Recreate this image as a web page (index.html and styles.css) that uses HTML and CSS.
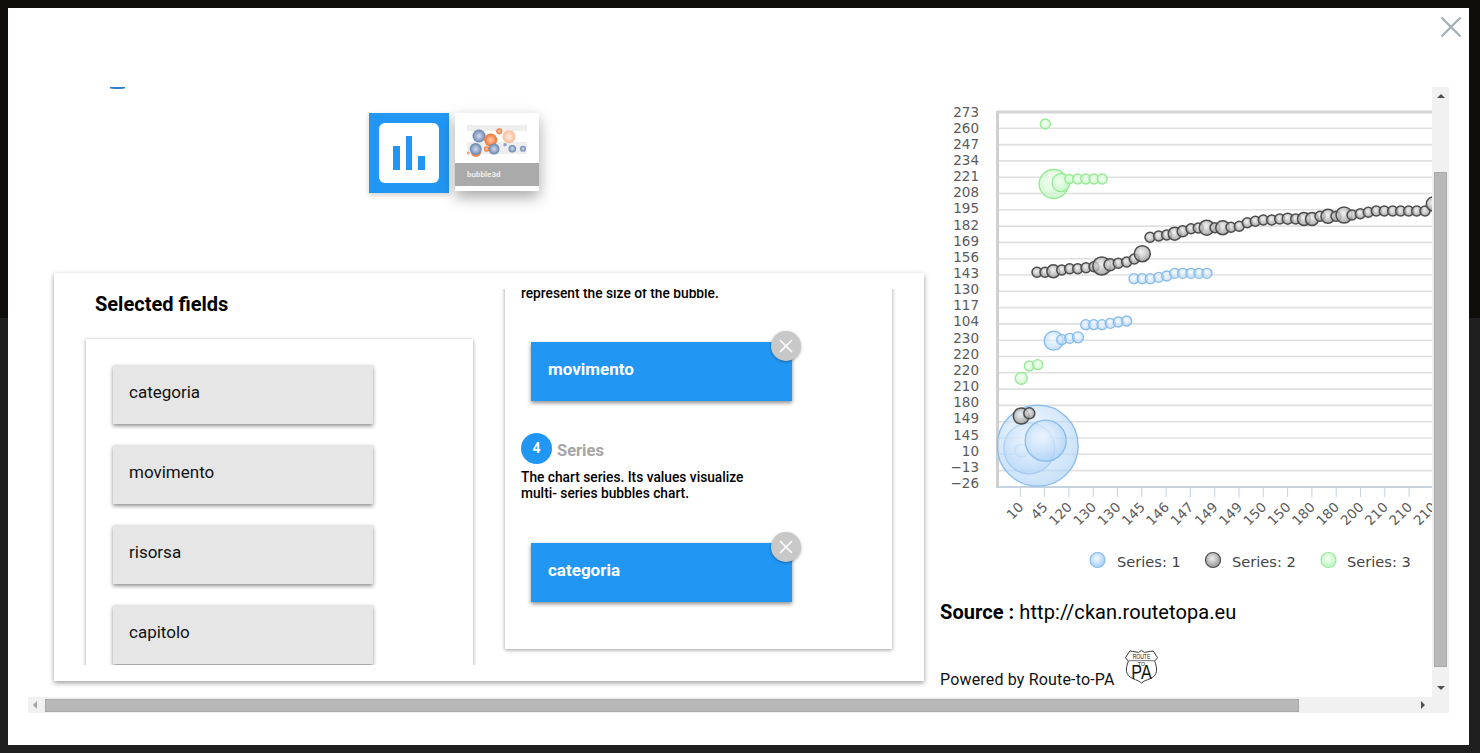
FILE: index.html
```html
<!DOCTYPE html>
<html lang="en">
<head>
    <meta charset="UTF-8">
    <meta name="viewport" content="width=device-width, initial-scale=1.0">
    <title>Bubble chart datalet</title>
    <link rel="stylesheet" href="styles.css">
</head>
<body>
    <div class="modal">
        <button class="modal-close" aria-label="Close">
            <svg width="22" height="22" viewBox="0 0 22 22"><path d="M1.5 1.5 20.5 20.5M20.5 1.5 1.5 20.5" /></svg>
        </button>
        <div class="frame">
            <div class="viewport">
                <div class="main">
                    <div class="spinner"></div>
                    <div class="tools">
                        <div class="tool-icon">
                            <div class="tool-icon-inner">
                                <span class="bar bar-mid"></span>
                                <span class="bar bar-tall"></span>
                                <span class="bar bar-low"></span>
                            </div>
                        </div>
                        <div class="thumb">
                            <svg class="thumb-pic" width="84" height="50" viewBox="455 113 84 50">
                                <defs>
                                    <radialGradient id="t-blue"><stop offset="0" stop-color="#d5dcea" /><stop offset="1" stop-color="#6485b4" /></radialGradient>
                                    <radialGradient id="t-orange"><stop offset="0" stop-color="#fdd0b4" /><stop offset="1" stop-color="#f26f2c" /></radialGradient>
                                    <radialGradient id="t-peach"><stop offset="0" stop-color="#fdeee4" /><stop offset="1" stop-color="#fabb98" /></radialGradient>
                                </defs>
                                <rect x="467" y="125" width="60" height="6" fill="#eeeeee" />
                                <rect x="467" y="142" width="60" height="12" fill="#eeeeee" />
                                <circle cx="499.3" cy="131.3" r="3" fill="url(#t-orange)" />
                                <circle cx="509" cy="136.7" r="6.5" fill="url(#t-peach)" />
                                <circle cx="479" cy="136" r="6.5" fill="url(#t-blue)" />
                                <circle cx="490.7" cy="140" r="6.5" fill="url(#t-orange)" />
                                <circle cx="476" cy="152" r="5" fill="url(#t-orange)" />
                                <circle cx="475.7" cy="149" r="6" fill="url(#t-blue)" />
                                <circle cx="486.7" cy="149" r="2.800" fill="url(#t-orange)" />
                                <circle cx="494" cy="149" r="5.500" fill="url(#t-blue)" />
                                <circle cx="512.3" cy="148.7" r="3.800" fill="url(#t-blue)" />
                                <circle cx="523" cy="148.7" r="3" fill="url(#t-blue)" />
                                <circle cx="505" cy="144.7" r="1.800" fill="#8aa3c8" />
                                <circle cx="468.3" cy="153" r="1.500" fill="#f7a478" />
                            </svg>
                            <div class="thumb-label">bubble3d</div>
                        </div>
                    </div>
                    <div class="card">
                        <div class="card-clip">
                            <div class="fields-col">
                                <h2 class="fields-title">Selected fields</h2>
                                <div class="panel fields-panel">
                                    <div class="field">categoria</div>
                                    <div class="field">movimento</div>
                                    <div class="field">risorsa</div>
                                    <div class="field">capitolo</div>
                                </div>
                            </div>
                            <div class="panel inputs-panel">
                                <p class="step-desc">represent the size of the bubble.</p>
                                <div class="chosen chosen-first">
                                    movimento
                                    <span class="chosen-remove"><svg width="14" height="14" viewBox="0 0 14 14"><path d="M1 1 13 13M13 1 1 13" /></svg></span>
                                </div>
                                <div class="step-head">
                                    <span class="step-num">4</span>
                                    <span class="step-name">Series</span>
                                </div>
                                <p class="step-desc">The chart series. Its values visualize multi- series bubbles chart.</p>
                                <div class="chosen">
                                    categoria
                                    <span class="chosen-remove"><svg width="14" height="14" viewBox="0 0 14 14"><path d="M1 1 13 13M13 1 1 13" /></svg></span>
                                </div>
                            </div>
                        </div>
                    </div>
                </div>
                <div class="side">
                    <svg id="chart" class="chart" width="492" height="475" viewBox="940 100 492 475"></svg>
                    <p class="source"><b>Source :</b> http://ckan.routetopa.eu</p>
                    <div class="powered">
                        <span>Powered by Route-to-PA</span>
                        <svg class="shield" width="35" height="35" viewBox="0 0 36 36">
                            <path d="M18 1.5 21 3.5 27 2.5 30 2 34.5 9 31.5 12.5C34.5 20 35 27 27 30.5 23 32 20 33 18 35 16 33 13 32 9 30.5 1 27 1.500 20 4.500 12.500L1.500 9 6 2 9 2.500 15 3.500Z" />
                            <path class="shield-line" d="M5 12H31" />
                            <text class="shield-small" x="18" y="10" textLength="18" lengthAdjust="spacingAndGlyphs">ROUTE</text>
                            <text class="shield-tiny" x="18" y="17">TO</text>
                            <text class="shield-big" x="18" y="31" textLength="21" lengthAdjust="spacingAndGlyphs">PA</text>
                        </svg>
                    </div>
                </div>
            </div>
            <div class="vbar">
                <span class="arrow arrow-up"></span>
                <span class="vbar-thumb"></span>
                <span class="arrow arrow-down"></span>
            </div>
            <div class="hbar">
                <span class="arrow arrow-left"></span>
                <span class="hbar-thumb"></span>
                <span class="arrow arrow-right"></span>
            </div>
        </div>
    </div>
    <script src="chart.js"></script>
</body>
</html>
```

FILE: styles.css
```css
* {
    box-sizing: border-box;
}
body {
    margin: 0;
    height: 753px;
    overflow: hidden;
    font-family: Roboto, "Liberation Sans", sans-serif;
    background: linear-gradient(#100e0b 318px, #1f1f1f 318px);
}
.modal {
    position: relative;
    margin: 8px 11px 8px 8px;
    height: 737px;
    padding: 79px 20px 32px;
    background: #fff;
}
.modal-close {
    position: absolute;
    top: 8px;
    right: 7px;
    padding: 0;
    border: 0;
    background: none;
}
.modal-close svg {
    display: block;
}
.modal-close path {
    fill: none;
    stroke: #a4b1b7;
    stroke-width: 2.4;
}

/* scrolling frame */
.frame {
    display: grid;
    grid-template-columns: 1fr 17px;
    grid-template-rows: 610px 16px;
    height: 626px;
}
.viewport {
    display: flex;
    overflow: hidden;
}
.vbar {
    display: flex;
    flex-direction: column;
    align-items: center;
    justify-content: space-between;
    padding: 7px 0;
    background: #f1f1f1;
}
.vbar-thumb {
    width: 13px;
    height: 495px;
    margin-top: 67px;
    margin-bottom: 13px;
    background: #b8b8b8;
    border: 1px solid #a9a9a9;
}
.hbar {
    grid-column: 1 / 3;
    display: flex;
    align-items: center;
    padding: 0 24px 0 5px;
    background: #f1f1f1;
}
.hbar-thumb {
    width: 1254px;
    height: 13px;
    margin-left: 8px;
    margin-right: auto;
    background: #b8b8b8;
    border: 1px solid #a9a9a9;
}
.arrow {
    width: 0;
    height: 0;
    border: 4px solid transparent;
}
.arrow-up {
    border-top: 0;
    border-bottom: 4px solid #505050;
}
.arrow-down {
    border-bottom: 0;
    border-top: 4px solid #505050;
}
.arrow-left {
    border-left: 0;
    border-right: 4px solid #a3a3a3;
}
.arrow-right {
    border-right: 0;
    border-left: 4px solid #505050;
}

/* left part */
.main {
    position: relative;
    flex: 0 0 902px;
    padding-left: 26px;
}
.spinner {
    position: absolute;
    top: 0;
    left: 82px;
    width: 15px;
    height: 1.500px;
    background: #2b7fc4;
    border-radius: 0 0 50% 50%;
}
.tools {
    display: flex;
    align-items: flex-start;
    gap: 6px;
    height: 186px;
    padding: 26px 0 0 315px;
}
.tool-icon {
    width: 80px;
    height: 80px;
    padding: 10px;
    background: #2196f3;
    box-shadow: 0 2px 6px rgba(0, 0, 0, 0.2);
}
.tool-icon-inner {
    display: flex;
    align-items: flex-end;
    justify-content: center;
    gap: 6px;
    height: 60px;
    padding-bottom: 13px;
    background: #fff;
    border-radius: 6px;
}
.bar {
    width: 6.500px;
    background: #2196f3;
}
.bar-mid {
    height: 24px;
}
.bar-tall {
    height: 34px;
}
.bar-low {
    height: 14px;
}
.thumb {
    width: 84px;
    height: 78px;
    background: #fff;
    box-shadow: 0 6px 14px rgba(0, 0, 0, 0.35);
}
.thumb-pic {
    display: block;
}
.thumb-label {
    height: 23px;
    padding-left: 12px;
    font-size: 8px;
    font-weight: 700;
    line-height: 23px;
    color: #eee;
    background: #aaaaaa;
}
.card {
    width: 870px;
    height: 408px;
    padding: 16px 22px;
    background: #fff;
    box-shadow: 0 2px 5px rgba(0, 0, 0, 0.4);
}
.card-clip {
    display: flex;
    gap: 32px;
    height: 376px;
    padding: 0 10px;
    overflow: hidden;
}
.panel {
    background: #fff;
    box-shadow: 0 1px 4px rgba(0, 0, 0, 0.4);
}
.fields-col {
    flex: 0 0 387px;
}
.fields-title {
    height: 50px;
    margin: 0;
    padding: 3px 0 0 9px;
    font-size: 20px;
    font-weight: 700;
    line-height: 24px;
    color: #000;
}
.fields-panel {
    padding: 26px 27px;
    height: 400px;
}
.field {
    width: 260px;
    height: 59px;
    margin-bottom: 21px;
    padding-left: 16px;
    font-size: 17px;
    line-height: 54px;
    color: #111;
    background: #e6e6e6;
    box-shadow: 0 2px 4px rgba(0, 0, 0, 0.45);
}

/* inputs column */
.inputs-panel {
    flex: 0 0 387px;
    height: 370px;
    margin-top: -10px;
    padding: 6px 16px 0;
}
.step-desc {
    max-width: 240px;
    margin: 0;
    font-size: 13.750px;
    font-weight: 500;
    line-height: 16px;
    color: #000;
}
.chosen {
    position: relative;
    width: 261px;
    height: 59px;
    margin: 42px 0 0 10px;
    padding-left: 17px;
    font-size: 17px;
    font-weight: 700;
    line-height: 54px;
    color: #fff;
    background: #2196f3;
    box-shadow: 0 2px 4px rgba(0, 0, 0, 0.45);
}
.chosen-first {
    margin-top: 41px;
}
.chosen-remove {
    position: absolute;
    top: -11px;
    right: -9px;
    display: flex;
    align-items: center;
    justify-content: center;
    width: 30px;
    height: 30px;
    background: #c8c8c8;
    border-radius: 50%;
    box-shadow: 0 1px 3px rgba(0, 0, 0, 0.3);
}
.chosen-remove path {
    fill: none;
    stroke: #fff;
    stroke-width: 1.6;
}
.step-head {
    display: flex;
    align-items: center;
    gap: 5px;
    height: 32px;
    margin: 31px 0 5px;
}
.step-num {
    width: 31px;
    height: 31px;
    font-size: 14px;
    font-weight: 700;
    line-height: 30px;
    text-align: center;
    color: #fff;
    background: #2196f3;
    border-radius: 50%;
}
.step-name {
    padding-top: 4px;
    font-size: 16.500px;
    font-weight: 700;
    color: #a5a5a5;
}

/* right part */
.side {
    flex: 0 0 auto;
    width: 492px;
    padding: 13px 0 0 10px;
}
.chart {
    display: block;
}
.chart text {
    font-family: "DejaVu Sans", sans-serif;
    font-size: 13.500px;
    fill: #5b5b5b;
}
.chart .legend-text {
    font-size: 14.600px;
    fill: #444;
}
.source {
    margin: 25px 0 0;
    font-size: 20px;
    line-height: 24px;
    letter-spacing: 0.07px;
    color: #000;
}
.source b {
    font-weight: 700;
}
.powered {
    display: flex;
    align-items: flex-end;
    gap: 9px;
    margin-top: 26px;
    font-size: 16px;
    line-height: 22px;
    letter-spacing: 0.17px;
    color: #111;
}
.shield {
    display: block;
    margin: -1px 0 7px;
}
.shield path {
    fill: #fff;
    stroke: #333;
    stroke-width: 1;
}
.shield .shield-line {
    stroke-width: 0.7;
}
.shield text {
    font-family: "Liberation Sans", sans-serif;
    text-anchor: middle;
    letter-spacing: 0;
    fill: #111;
}
.shield-small {
    font-size: 7px;
}
.shield-tiny {
    font-size: 5.500px;
}
.shield-big {
    font-size: 20px;
}
```

FILE: chart.js
```js
const svg = document.getElementById('chart');
const NS = 'http://www.w3.org/2000/svg';

function add(tag, attrs, parent) {
    const el = document.createElementNS(NS, tag);
    for (const key in attrs) el.setAttribute(key, attrs[key]);
    (parent || svg).appendChild(el);
    return el;
}

function gradient(id, from, to) {
    const g = add('radialGradient', { id: id, cx: '0.45', cy: '0.4', r: '0.6' }, defs);
    add('stop', { offset: '0', 'stop-color': from }, g);
    add('stop', { offset: '1', 'stop-color': to }, g);
}

const defs = add('defs', {});
gradient('g-blue', '#f2f8fe', '#a4cdf6');
gradient('g-gray', '#efefef', '#969696');
gradient('g-green', '#f3fff3', '#c0f5c0');

// y axis
const yLabels = [273, 260, 247, 234, 221, 208, 195, 182, 169, 156, 143, 130, 117, 104, 230, 220, 220, 210, 180, 149, 145, 10, '\u221213', '\u221226'];
yLabels.forEach((label, i) => {
    const y = 112 + i * 16.3;
    if (i < 23) {
        add('line', { x1: 997, x2: 1440, y1: y, y2: y, stroke: i === 0 ? '#d4d4d4' : '#e0e0e0', 'stroke-width': i === 0 ? 3 : 1.6 });
    }
    const t = add('text', { x: 979, y: 116.5 + i * 16.15, 'text-anchor': 'end' });
    t.textContent = label;
});
add('line', { x1: 997.500, x2: 997.500, y1: 111, y2: 487, stroke: '#d0d0d0', 'stroke-width': 3 });
add('line', { x1: 996, x2: 1440, y1: 487, y2: 487, stroke: '#c6d2de', 'stroke-width': 2 });

// x axis
const xLabels = [10, 45, 120, 130, 130, 145, 146, 147, 149, 149, 150, 150, 180, 180, 200, 210, 210, 210];
xLabels.forEach((label, i) => {
    const x = 1020.300 + i * 24.300;
    add('line', { x1: x, x2: x, y1: 487, y2: 497, stroke: '#c6d2de', 'stroke-width': 1 });
    const t = add('text', {
        x: x + 4,
        y: 508,
        'text-anchor': 'end',
        transform: 'rotate(-45 ' + (x + 4) + ' 508)'
    });
    t.textContent = label;
});

// [x, y, r]
const blue = [
    [1021.3, 450.7, 6.5], [1029.3, 448.3, 25.5], [1037.7, 445.7, 40.5], [1045.7, 440.7, 20.5],
    [1053.7, 340.7, 9.5], [1061.7, 339.7, 5], [1069.7, 338.3, 5], [1078, 337.3, 5.5],
    [1085.7, 324.7, 5], [1093.7, 324.7, 5], [1102, 324.7, 5], [1110.3, 323.3, 5], [1118.3, 322, 5], [1126.7, 321, 5],
    [1134, 278.7, 5], [1142.3, 278.7, 5], [1150.3, 278.7, 5], [1158.7, 277.3, 5], [1166.7, 276, 5],
    [1174.7, 273.3, 5], [1182.7, 273.3, 5], [1191, 273.3, 5], [1199, 273.3, 5], [1207, 273.3, 5]
];
const gray = [
    [1021.3, 416, 8], [1029.3, 413.3, 5.5],
    [1037, 272.3, 5], [1045, 272.3, 5], [1053.3, 271.3, 6.5], [1061.7, 270, 5], [1069.7, 268.7, 5],
    [1077.7, 268.7, 5], [1086, 267.7, 5], [1094, 266.7, 5], [1101.7, 266, 9], [1110, 264.7, 6],
    [1118.3, 263.3, 5], [1126.7, 262, 5], [1134.3, 259, 5], [1142.3, 253.7, 8],
    [1150, 237.3, 5], [1158.7, 236, 5], [1166.7, 235, 5], [1174.7, 233.7, 6.5], [1182.7, 231.3, 5.5],
    [1191, 228.7, 5], [1198.3, 228, 5], [1206.7, 227.7, 7.5], [1215, 227.7, 5], [1222.7, 227.7, 7],
    [1231, 227.3, 5], [1239.3, 226.3, 5], [1247.3, 222.7, 5], [1255.3, 221.3, 5], [1263.3, 220, 5],
    [1271.7, 220, 5], [1279.7, 219, 5], [1287.7, 218.7, 5.5], [1295.7, 219, 5], [1304, 219, 6.5],
    [1312, 219, 6.5], [1320, 216.3, 5], [1328, 216.3, 7], [1336, 216.3, 5], [1344, 215, 8],
    [1352, 215, 5], [1360.3, 213.7, 5], [1368.3, 212.3, 5], [1376.3, 211, 5], [1384.3, 211, 5],
    [1392.7, 211, 5], [1400.7, 211, 5], [1408.7, 211, 5], [1416.7, 211, 5], [1425, 211, 5], [1433.3, 204, 7]
];
const green = [
    [1021.3, 378.3, 6], [1029.3, 366, 5], [1037.7, 364.7, 5], [1045.3, 124, 5],
    [1053.7, 184, 14.5], [1061, 182.7, 9], [1069.3, 179, 4.5], [1077.7, 179, 5], [1085.7, 179, 5], [1094, 179, 5], [1102.3, 179, 5]
];

function bubbles(list, fill, stroke, width, opacity) {
    list.forEach(b => {
        add('circle', { cx: b[0], cy: b[1], r: b[2], fill: fill, 'fill-opacity': opacity, stroke: stroke, 'stroke-width': width });
    });
}
bubbles(blue, 'url(#g-blue)', '#86bbee', 1.3, 0.6);
bubbles(gray, 'url(#g-gray)', '#4c4c4c', 1.5, 0.8);
bubbles(green, 'url(#g-green)', '#96ea96', 1.3, 0.72);

// legend
[['Series: 1', 1097.5, 1117, 'url(#g-blue)', '#86bbee'],
 ['Series: 2', 1213, 1232, 'url(#g-gray)', '#4c4c4c'],
 ['Series: 3', 1328.5, 1347, 'url(#g-green)', '#96ea96']].forEach(item => {
    add('circle', { cx: item[1], cy: 560, r: 7.500, fill: item[3], stroke: item[4], 'stroke-width': 1.2 });
    const t = add('text', { x: item[2], y: 567, class: 'legend-text' });
    t.textContent = item[0];
});
```
